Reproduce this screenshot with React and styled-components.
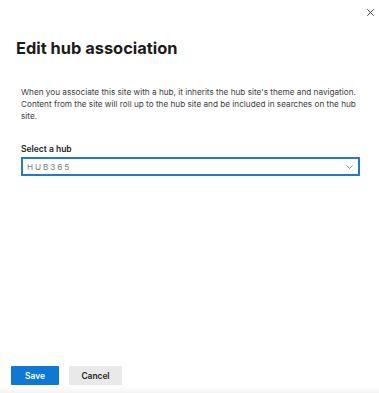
import React from "react";
import styled, { createGlobalStyle } from "styled-components";

const Global = createGlobalStyle`
  html, body { margin: 0; padding: 0; background: #fff; }
  body { font-family: Inter, "Liberation Sans", sans-serif; }
`;

const Panel = styled.div`
  width: 379px;
  height: 393px;
  display: flex;
  flex-direction: column;
  background: #fff;
  box-sizing: border-box;
`;

const TopBar = styled.div`
  display: flex;
  justify-content: flex-end;
  padding: 9px 5px 0 0;
  height: 7px;
`;

const CloseButton = styled.button`
  width: 7px;
  height: 7px;
  padding: 0;
  border: 0;
  background: none;
  display: flex;
  align-items: center;
  justify-content: center;
  cursor: pointer;
`;

const Title = styled.h1`
  margin: 21px 0 0 16px;
  font-size: 16.4px;
  line-height: 22px;
  font-weight: 700;
  color: #1b1b1b;
`;

const Body = styled.div`
  flex: 1;
  padding: 0 20px 0 21px;
  display: flex;
  flex-direction: column;
`;

const Description = styled.p`
  margin: 27px 0 0;
  font-size: 8.2px;
  line-height: 12px;
  color: #3d3d3d;
`;

const Field = styled.div`
  display: flex;
  flex-direction: column;
  gap: 2px;
  margin-top: 21px;
`;

const Label = styled.label`
  font-size: 8.5px;
  line-height: 12px;
  font-weight: 600;
  color: #222;
`;

const Select = styled.div`
  height: 19px;
  box-sizing: border-box;
  border: 2px solid #2678cf;
  display: flex;
  align-items: center;
  justify-content: space-between;
  padding: 0 5px 0 4px;
  width: 339px;
`;

const SelectValue = styled.span`
  font-size: 8.2px;
  letter-spacing: 1.9px;
  color: #7a7a7a;
`;

const Footer = styled.div`
  display: flex;
  gap: 10px;
  padding: 0 0 8px 11px;
  background: linear-gradient(to bottom, #fff 0%, #fff 75%, #f3f3f3 100%);
`;

const Button = styled.button`
  height: 19px;
  width: ${(p) => p.$w}px;
  border: 0;
  border-radius: 1px;
  font-family: inherit;
  font-size: 8.4px;
  font-weight: 600;
  padding: 0;
  background: ${(p) => (p.$primary ? "#0f78d4" : "#e9e9e9")};
  color: ${(p) => (p.$primary ? "#fff" : "#222")};
`;

export default function App() {
  return (
    <>
      <Global />
      <Panel>
        <TopBar>
          <CloseButton aria-label="Close">
            <svg width="7" height="7" viewBox="0 0 7 7">
              <path d="M0.3 0.3 L6.7 6.7 M6.7 0.3 L0.3 6.7" stroke="#444" strokeWidth="1" />
            </svg>
          </CloseButton>
        </TopBar>
        <Title>Edit hub association</Title>
        <Body>
          <Description>
            When you associate this site with a hub, it inherits the hub site's theme and navigation.
            Content from the site will roll up to the hub site and be included in searches on the hub
            site.
          </Description>
          <Field>
            <Label>Select a hub</Label>
            <Select>
              <SelectValue>HUB365</SelectValue>
              <svg width="7" height="4" viewBox="0 0 7 4">
                <path d="M0.4 0.4 L3.5 3.5 L6.6 0.4" fill="none" stroke="#8a8a8a" strokeWidth="1" />
              </svg>
            </Select>
          </Field>
        </Body>
        <Footer>
          <Button $primary $w={48}>Save</Button>
          <Button $w={53}>Cancel</Button>
        </Footer>
      </Panel>
    </>
  );
}
